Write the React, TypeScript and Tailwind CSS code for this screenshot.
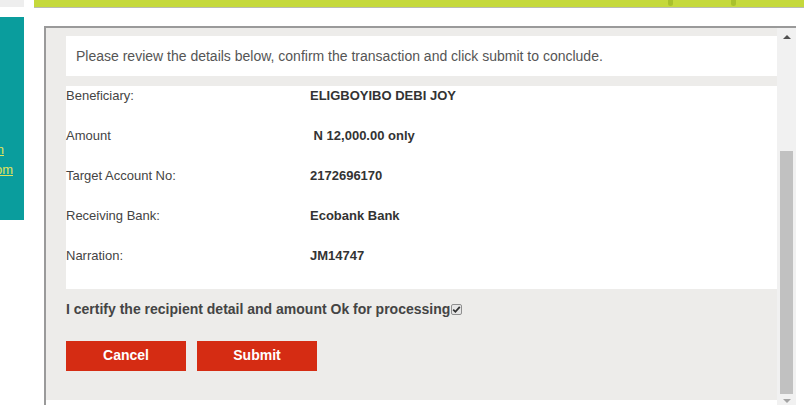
import React from "react";

const rows: { label: string; value: string }[] = [
  { label: "Beneficiary:", value: "ELIGBOYIBO DEBI JOY" },
  { label: "Amount", value: "\u00a0N 12,000.00 only" },
  { label: "Target Account No:", value: "2172696170" },
  { label: "Receiving Bank:", value: "Ecobank Bank" },
  { label: "Narration:", value: "JM14747" },
];

function Checkbox() {
  return (
    <span className="ml-[1px] inline-flex h-[11px] w-[11px] items-center justify-center rounded-[2px] border border-[#8f8f8f] bg-[#e6e6e6]">
      <svg width="9" height="9" viewBox="0 0 9 9">
        <path d="M1.2 4.6 L3.4 6.8 L7.8 1.8" stroke="#333" strokeWidth="1.8" fill="none" />
      </svg>
    </span>
  );
}

function Scrollbar() {
  return (
    <div className="flex w-[19px] flex-col items-center bg-[#f1f1f1]">
      <div className="flex h-[17px] w-full items-center justify-center">
        <span className="h-0 w-0 border-x-[4px] border-b-[4px] border-x-transparent border-b-[#505050]" />
      </div>
      <div className="mt-[106px] h-[243px] w-[13px] bg-[#c1c1c1]" />
      <div className="flex h-[11px] w-full items-end justify-center">
        <span className="mb-[2px] h-0 w-0 border-x-[4px] border-t-[4px] border-x-transparent border-t-[#a3a3a3]" />
      </div>
    </div>
  );
}

export default function App() {
  return (
    <div className="flex h-[405px] w-[804px] overflow-hidden bg-white font-['Liberation_Sans',Arial,sans-serif]">
      {/* left sidebar, scrolled so only the tail of the links shows */}
      <div className="flex w-[24px] shrink-0 flex-col">
        <div className="h-[7px] bg-[#eeeeee]" />
        <div className="mt-[10px] flex h-[203px] flex-col items-end overflow-hidden bg-[#0a9d9d] pt-[123px] text-[13px] leading-[20px] text-[#e3e35c]">
          <span className="mr-[20px] whitespace-nowrap underline">Sign in</span>
          <span className="mr-[11px] whitespace-nowrap underline">support@bank.com</span>
        </div>
      </div>

      {/* main */}
      <div className="ml-[10px] flex flex-1 flex-col">
        <div className="flex h-[8px] items-start border-b border-[#b9bcb0] bg-[#c5d93c]">
          <span className="ml-[634px] h-[6px] w-[5px] rounded-b-full bg-[#a9c12c]" />
          <span className="ml-[58px] h-[6px] w-[5px] rounded-b-full bg-[#a9c12c]" />
        </div>

        {/* modal */}
        <div className="ml-[10px] mr-[8px] mt-[18px] flex flex-1 border-l-2 border-t-2 border-[#9a9a9a]">
          <div className="flex flex-1 flex-col">
            <div className="flex h-[372px] flex-col bg-[#edecea] pl-[20px] pt-[8px]">
              <div className="flex h-[40px] items-center bg-white px-[10px] text-[14px] text-[#555]">
                Please review the details below, confirm the transaction and click submit to conclude.
              </div>

              <div className="mt-[10px] bg-white pb-[3px]">
                {rows.map((r) => (
                  <div key={r.label} className="flex h-[40px] items-start text-[13px] leading-[20px]">
                    <div className="w-[244px] text-[#444]">{r.label}</div>
                    <div className="font-bold text-[#333]">{r.value}</div>
                  </div>
                ))}
              </div>

              <div className="mt-[11px] flex items-center text-[14px] font-bold leading-[18px] text-[#444]">
                I certify the recipient detail and amount Ok for processing
                <Checkbox />
              </div>

              <div className="mt-[23px] flex gap-[11px]">
                <button className="h-[30px] w-[120px] bg-[#d52c13] pb-[2px] text-[14px] font-bold text-white">
                  Cancel
                </button>
                <button className="h-[30px] w-[120px] bg-[#d52c13] pb-[2px] text-[14px] font-bold text-white">
                  Submit
                </button>
              </div>
            </div>
          </div>
          <Scrollbar />
        </div>
      </div>
    </div>
  );
}
